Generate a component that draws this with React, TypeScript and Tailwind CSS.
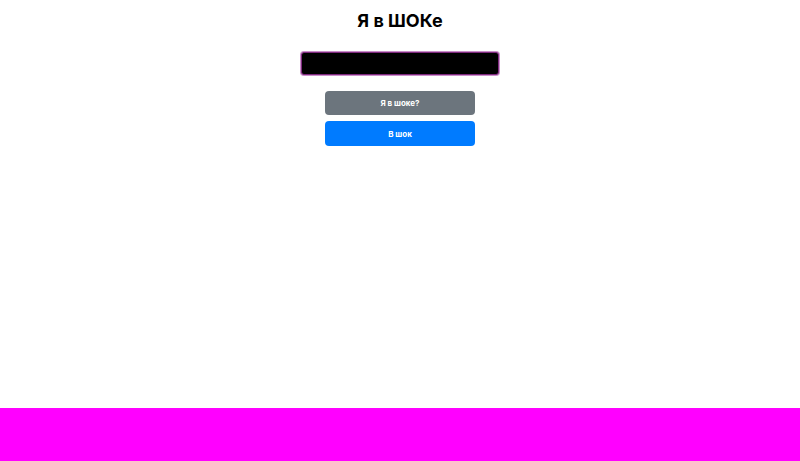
import React, { useState } from "react";

const App = () => {
  const [value, setValue] = useState("");

  return (
    <div className="flex h-[461px] flex-col bg-white font-['Inter',sans-serif]">
      <main className="flex flex-1 flex-col items-center">
        <h1 className="mt-[10px] text-[18px] font-bold leading-[22px] text-black">Я в ШОКе</h1>
        <input
          value={value}
          onChange={(e) => setValue(e.target.value)}
          className="mt-[20px] h-[23px] w-[198px] rounded-[3px] border border-[#7d2a7d] bg-black px-2 text-sm text-white shadow-[0_0_0_1px_#c98fc9] outline-none"
        />
        <div className="mt-[16px] flex flex-col gap-[6px]">
          <button className="h-[24px] w-[150px] rounded-[4px] bg-[#6c757d] text-[8px] font-bold text-white">
            Я в шоке?
          </button>
          <button className="h-[25px] w-[150px] rounded-[4px] bg-[#007bff] text-[8px] font-bold text-white">
            В шок
          </button>
        </div>
      </main>
      <footer className="h-[53px] bg-[#ff00ff]" />
    </div>
  );
};

export default App;
